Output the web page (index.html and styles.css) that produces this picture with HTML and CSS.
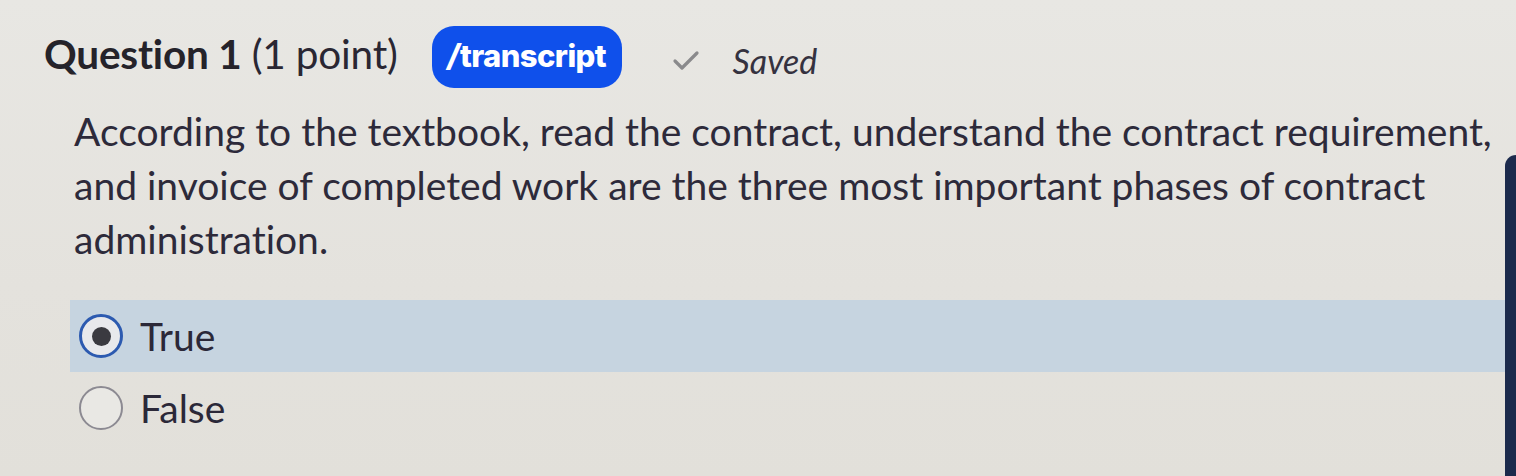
FILE: index.html
```html
<!DOCTYPE html>
<html lang="en">
<head>
<meta charset="utf-8">
<title>Question 1</title>
<link rel="stylesheet" href="styles.css">
</head>
<body>
<main class="page">
  <section class="content">
    <header class="q-head">
      <h1 class="q-title"><strong>Question 1</strong> (1 point)</h1>
      <span class="badge"><span class="slash">/</span>transcript</span>
      <span class="saved">
        <svg class="check" viewBox="0 0 28 22" width="28" height="22" aria-hidden="true"><path d="M3 12 L10 19 L25 4" fill="none" stroke="#8a8a8c" stroke-width="3.2" stroke-linecap="round" stroke-linejoin="round"/></svg>
        <em>Saved</em>
      </span>
    </header>
    <p class="q-text">According to the textbook, read the contract, understand the contract requirement, and invoice of completed work are the three most important phases of contract administration.</p>
    <div class="options">
      <label class="opt selected"><span class="radio on"><span class="dot"></span></span><span class="opt-label">True</span></label>
      <label class="opt"><span class="radio"></span><span class="opt-label">False</span></label>
    </div>
  </section>
  <aside class="side-bar"></aside>
</main>
</body>
</html>
```
FILE: styles.css
```css
html, body {
  margin: 0;
  padding: 0;
}
body {
  width: 1516px;
  height: 476px;
  overflow: hidden;
  background: linear-gradient(180deg, #e8e7e3 0%, #e4e2dd 60%, #e2e0da 100%);
  font-family: Lato, "Open Sans", sans-serif;
  font-variant-ligatures: none;
  color: #2b2838;
}
.page {
  display: flex;
  height: 476px;
}
.content {
  flex: 1;
  padding: 22px 0 0 44px;
}
.q-head {
  display: flex;
  align-items: center;
  height: 70px;
}
.q-title {
  margin: -8px 0 0 0;
  font-size: 40.5px;
  font-weight: 400;
  color: #2a2733;
  letter-spacing: -0.2px;
}
.q-title strong {
  font-weight: 700;
  color: #25232a;
}
.badge {
  margin-left: 34px;
  height: 62px;
  width: 190px;
  box-sizing: border-box;
  border-radius: 22px;
  background: #0f50eb;
  color: #fff;
  display: flex;
  align-items: center;
  justify-content: center;
  font-family: Inter, Roboto, sans-serif;
  font-weight: 800;
  font-size: 31px;
  letter-spacing: -0.6px;
  padding-bottom: 3px;
}
.slash {
  font-style: italic;
  margin-right: 1px;
}
.saved {
  display: flex;
  align-items: center;
  margin-left: 50px;
  margin-top: 6px;
  color: #35323f;
}
.check {
  display: block;
}
.saved em {
  margin-left: 33px;
  font-size: 34px;
  font-style: italic;
}
.q-text {
  margin: 12px 0 0 30px;
  font-size: 39px;
  line-height: 54px;
  color: #2d2a3a;
  max-width: 1431px;
}
.options {
  margin-top: 34px;
  margin-left: 26px;
}
.opt {
  display: flex;
  align-items: center;
  height: 72px;
  padding-left: 9px;
}
.opt.selected {
  background: #c6d4e0;
}
.radio {
  width: 44px;
  height: 44px;
  box-sizing: border-box;
  border-radius: 50%;
  border: 2px solid #8c8a92;
  background: #e9e8e4;
  display: flex;
  align-items: center;
  justify-content: center;
}
.radio.on {
  border: 3px solid #2c5ab0;
  background: #e8e9ec;
}
.dot {
  width: 19px;
  height: 19px;
  border-radius: 50%;
  background: #3a3a40;
}
.opt-label {
  margin-left: 17px;
  font-size: 39px;
  color: #2b2838;
}
.side-bar {
  width: 11px;
  margin-top: 155px;
  background: #1b2a4c;
  border-top-left-radius: 12px;
}
```
